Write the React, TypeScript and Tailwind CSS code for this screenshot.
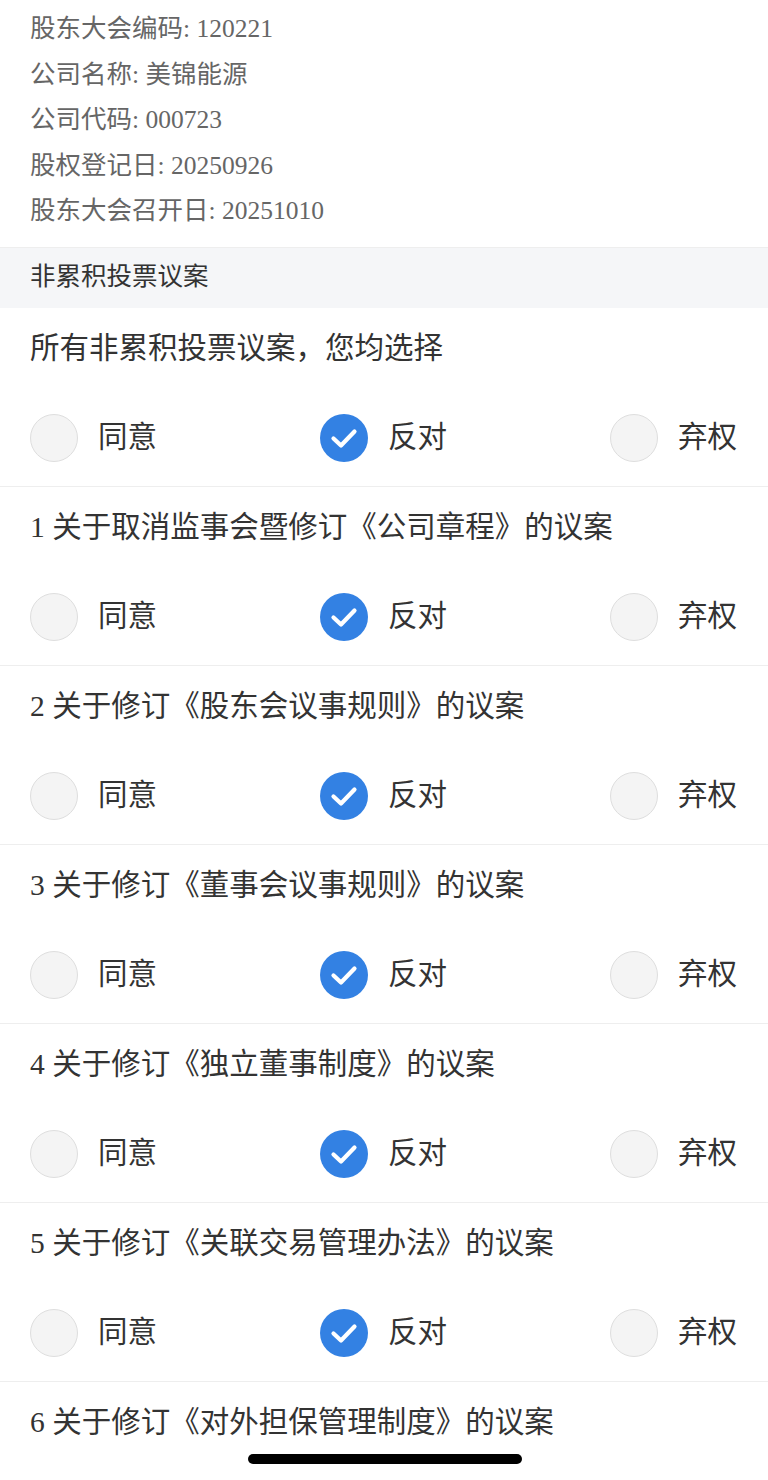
import React from "react";

const info = [
    ["股东大会编码", "120221"],
    ["公司名称", "美锦能源"],
    ["公司代码", "000723"],
    ["股权登记日", "20250926"],
    ["股东大会召开日", "20251010"],
];

const motions = [
    "所有非累积投票议案，您均选择",
    "1 关于取消监事会暨修订《公司章程》的议案",
    "2 关于修订《股东会议事规则》的议案",
    "3 关于修订《董事会议事规则》的议案",
    "4 关于修订《独立董事制度》的议案",
    "5 关于修订《关联交易管理办法》的议案",
    "6 关于修订《对外担保管理制度》的议案",
];

const Radio: React.FC<{ checked?: boolean; label: string }> = ({ checked, label }) => (
    <div className="flex items-center gap-[20px]">
        {checked ? (
            <div className="w-[48px] h-[48px] rounded-full bg-[#3381e3] flex items-center justify-center">
                <svg width="48" height="48" viewBox="0 0 48 48">
                    <path d="M13.5 24.5 L21 31.5 L34.5 17.5" fill="none" stroke="#fff" strokeWidth="4.2" strokeLinecap="round" strokeLinejoin="round" />
                </svg>
            </div>
        ) : (
            <div className="w-[48px] h-[48px] rounded-full bg-[#f4f4f4] border-[1.5px] border-[#dedede]" />
        )}
        <span className="text-[29.5px] text-[#333] leading-none">{label}</span>
    </div>
);

export default function App() {
    return (
        <div className="min-h-[1480px] bg-white" style={{ fontFamily: '"Liberation Serif", "Noto Sans CJK SC", serif' }}>
            {/* Meeting info */}
            <div className="px-[30px] pt-[6px] pb-[13px] text-[25.5px] text-[#666] leading-[45.5px]">
                {info.map(([k, v]) => (
                    <div key={k}>
                        {k}: {v}
                    </div>
                ))}
            </div>

            {/* Section header */}
            <div className="h-[61px] bg-[#f5f6f8] border-t border-[#eeeeee] flex items-center px-[30px] text-[25.5px] text-[#333]">
                非累积投票议案
            </div>

            {/* Motions */}
            {motions.map((m) => (
                <div key={m} className="border-b border-[#eeeeee] pt-[22px] pb-[24px] px-[30px]">
                    <div className="text-[29.5px] leading-[36px] text-[#333]">{m}</div>
                    <div className="mt-[48px] flex items-center h-[48px] pr-[1px]">
                        <div className="w-[290px]">
                            <Radio label="同意" />
                        </div>
                        <div className="flex-1">
                            <Radio checked label="反对" />
                        </div>
                        <Radio label="弃权" />
                    </div>
                </div>
            ))}

            {/* Home indicator */}
            <div className="fixed bottom-[16px] left-[248px] w-[274px] h-[10px] rounded-full bg-black" />
        </div>
    );
}
